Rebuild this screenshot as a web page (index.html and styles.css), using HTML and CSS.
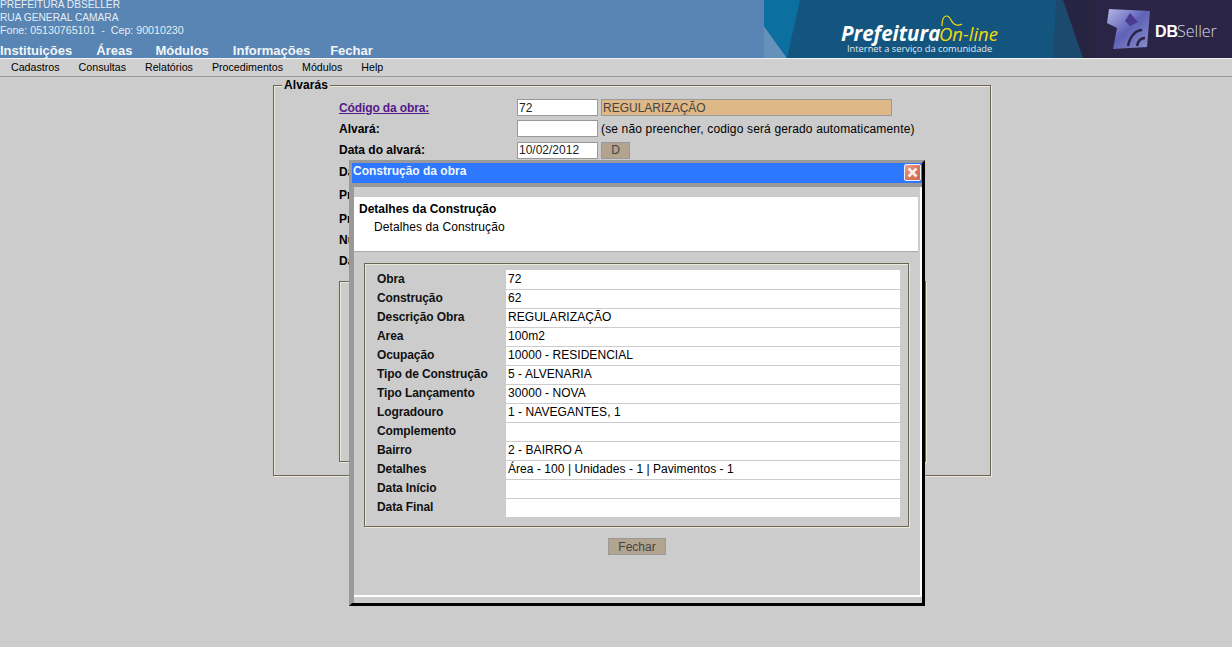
FILE: index.html
```html
<!DOCTYPE html>
<html>
<head>
	<meta charset="UTF-8">
	<title>Alvarás</title>
	<link rel="stylesheet" href="styles.css">
</head>
<body>
	<header class="topo">
		<div class="topo-esq">
			<div class="topo-info">
				PREFEITURA DBSELLER<br>
				RUA GENERAL CAMARA<br>
				<span class="fone">Fone: 05130765101 &nbsp;-&nbsp; Cep: 90010230</span>
			</div>
			<nav class="menu-topo">
				<a class="m-inst">Instituições</a>
				<a class="m-areas">Áreas</a>
				<a class="m-mod">Módulos</a>
				<a class="m-info">Informações</a>
				<a>Fechar</a>
			</nav>
		</div>
		<svg class="banner" width="468" height="58" viewBox="764 0 468 58">
			<defs>
				<linearGradient id="cubo" x1="0" y1="0" x2="1" y2="1">
					<stop offset="0" stop-color="#b4b8e6"/>
					<stop offset="0.5" stop-color="#5f62b6"/>
					<stop offset="1" stop-color="#8a90cc"/>
				</linearGradient>
			</defs>
			<rect x="764" y="0" width="468" height="58" fill="#13557f"/>
			<polygon points="764,0 764,26 787,58 764,58" fill="#6592bb"/>
			<polygon points="764,0 800,0 787,58 764,26" fill="#0b6f9f"/>
			<polygon points="1056,0 1063,0 1083,58 1053,58" fill="#1b4a6e"/>
			<polygon points="1063,0 1232,0 1232,58 1083,58" fill="#272442"/>
			<polygon points="1095,0 1232,0 1232,58 1095,58" fill="#2a2546"/>
			<text class="b-pref" x="841" y="41">Prefeitura</text>
			<text class="b-on" x="939" y="41">On-line</text>
			<path class="b-til" d="M942 26 C942 14 948 14 951 20 C954 26 959 26 962 24"/>
			<text class="b-sub" x="847" y="52">Internet a serviço da comunidade</text>
			<polygon points="1109,9 1150,11 1147,47 1113,49 1117,28 1107,23" fill="url(#cubo)"/>
			<polygon points="1125,21 1130,13 1138,22 1130,26" fill="#4a3a90"/>
			<path class="b-arco" d="M1128 46 C1130 36 1136 30 1142 30"/>
			<path class="b-arco" d="M1137 46 C1138 41 1141 38 1145 38"/>
			<text class="b-db" x="1155" y="37">DB</text>
			<text class="b-seller" x="1177" y="37">Seller</text>
		</svg>
	</header>
	<nav class="menu-sub">
		<a>Cadastros</a>
		<a>Consultas</a>
		<a>Relatórios</a>
		<a>Procedimentos</a>
		<a>Módulos</a>
		<a>Help</a>
	</nav>

	<fieldset class="alvaras">
		<legend>Alvarás</legend>
		<div class="form-obra">
			<div class="linha"><a class="rotulo link">Código da obra:</a><input class="campo" value="72"><input class="campo descr" value="REGULARIZAÇÃO"></div>
			<div class="linha"><b class="rotulo">Alvará:</b><input class="campo"><span class="nota">(se não preencher, codigo será gerado automaticamente)</span></div>
			<div class="linha h22"><b class="rotulo">Data do alvará:</b><input class="campo" value="10/02/2012"><button class="botao btn-d">D</button></div>
			<div class="linha"><b class="rotulo">Data de validade:</b></div>
			<div class="linha h26"><b class="rotulo">Processo:</b></div>
			<div class="linha"><b class="rotulo">Proprietário:</b></div>
			<div class="linha"><b class="rotulo">Número:</b></div>
			<div class="linha"><b class="rotulo">Data:</b></div>
			<div class="caixa-obs"></div>
		</div>
	</fieldset>

	<section class="janela">
		<div class="janela-titulo">
			<span>Construção da obra</span>
			<span class="fechar-x">
				<svg width="17" height="17" viewBox="0 0 17 17">
					<defs>
						<linearGradient id="xfundo" x1="0" y1="0" x2="1" y2="1">
							<stop offset="0" stop-color="#e8a58f"/>
							<stop offset="0.5" stop-color="#d9775c"/>
							<stop offset="1" stop-color="#cf6a50"/>
						</linearGradient>
					</defs>
					<rect x="0.5" y="0.5" width="16" height="16" rx="1.5" fill="url(#xfundo)" stroke="#eef3ff"/>
					<path d="M4.5 4.5 L12.5 12.5 M12.5 4.5 L4.5 12.5" stroke="#fbeee9" stroke-width="2.8"/>
				</svg>
			</span>
		</div>
		<div class="janela-corpo">
			<div class="corpo-interno">
				<div class="cabecalho">
					<b>Detalhes da Construção</b>
					<p>Detalhes da Construção</p>
				</div>
				<div class="quadro">
					<table class="dados">
						<tr><th>Obra</th><td>72</td></tr>
						<tr><th>Construção</th><td>62</td></tr>
						<tr><th>Descrição Obra</th><td>REGULARIZAÇÃO</td></tr>
						<tr><th>Area</th><td>100m2</td></tr>
						<tr><th>Ocupação</th><td>10000 - RESIDENCIAL</td></tr>
						<tr><th>Tipo de Construção</th><td>5 - ALVENARIA</td></tr>
						<tr><th>Tipo Lançamento</th><td>30000 - NOVA</td></tr>
						<tr><th>Logradouro</th><td>1 - NAVEGANTES, 1</td></tr>
						<tr><th>Complemento</th><td></td></tr>
						<tr><th>Bairro</th><td>2 - BAIRRO A</td></tr>
						<tr><th>Detalhes</th><td>Área - 100 | Unidades - 1 | Pavimentos - 1</td></tr>
						<tr><th>Data Início</th><td></td></tr>
						<tr><th>Data Final</th><td></td></tr>
					</table>
				</div>
				<div class="acoes"><button class="botao btn-fechar">Fechar</button></div>
			</div>
		</div>
	</section>
</body>
</html>
```

FILE: styles.css
```css
* {
	box-sizing: border-box;
}
body {
	margin: 0;
	background-color: #CCCCCC;
	font-family: "Liberation Sans", Arial, sans-serif;
	font-size: 12px;
	color: #000;
	overflow: hidden;
	height: 647px;
}
.topo {
	display: flex;
	justify-content: space-between;
	height: 58px;
	background-color: #5885B3;
	overflow: hidden;
}
.topo-info {
	margin-top: -2px;
	font-size: 10.2px;
	line-height: 13px;
	color: #E6EDF5;
}
.fone {
	font-size: 10.67px;
}
.menu-topo {
	display: flex;
	margin-top: 6px;
	font-size: 13px;
	font-weight: bold;
	line-height: 15px;
	color: #F2F5F9;
}
.m-inst { margin-right: 24px; }
.m-areas { margin-right: 23px; }
.m-mod { margin-right: 24px; }
.m-info { margin-right: 20px; }
.banner {
	flex: none;
	display: block;
}
.b-pref {
	font-family: "Open Sans", sans-serif;
	font-size: 20.5px;
	font-weight: 700;
	font-style: italic;
	fill: #fff;
}
.b-on {
	font-family: "Open Sans", sans-serif;
	font-size: 18.5px;
	font-weight: 400;
	font-style: italic;
	fill: #F4D90E;
}
.b-til {
	fill: none;
	stroke: #F4D90E;
	stroke-width: 1.2;
}
.b-sub {
	font-family: "Open Sans", sans-serif;
	font-size: 9.3px;
	fill: #E2EAF0;
}
.b-arco {
	fill: none;
	stroke: #2a2546;
	stroke-width: 2.5;
}
.b-db {
	font-family: "Liberation Sans", sans-serif;
	font-size: 16px;
	font-weight: bold;
	fill: #fff;
}
.b-seller {
	font-family: "Open Sans", sans-serif;
	font-size: 16px;
	font-weight: 300;
	fill: #D8D8E0;
}
.menu-sub {
	display: flex;
	gap: 19px;
	height: 19px;
	padding-left: 11px;
	background-color: #D0D0D0;
	border-top: 1px solid #F2F2F2;
	border-bottom: 1px solid #999;
	font-size: 10.67px;
	line-height: 17px;
}

/* formulario de tras */
.alvaras {
	width: 718px;
	height: 398px;
	margin: 1px 0 0 273px;
	padding: 0;
	border: 1px solid #6B6558;
	box-shadow: 1px 1px 0 #ECE9D8, inset 1px 1px 0 #ECE9D8;
	min-width: 0;
}
.alvaras legend {
	margin-left: 8px;
	padding: 0 2px;
	background-color: #CCCCCC;
	font-weight: bold;
	line-height: 14px;
	letter-spacing: 0.1px;
}
.form-obra {
	padding: 5px 0 0 65px;
}
.linha {
	display: flex;
	align-items: center;
	height: 21px;
}
.h22 { height: 22px; }
.h26 { height: 26px; }
.rotulo {
	width: 178px;
	flex: none;
	font-weight: bold;
}
.link {
	color: #551A8B;
	text-decoration: underline;
	letter-spacing: -0.12px;
}
.campo {
	width: 81px;
	height: 17px;
	margin: 0;
	padding: 0 1px;
	border: 1px solid #999;
	background-color: #fff;
	font: 12px "Liberation Sans", Arial, sans-serif;
	color: #222;
}
.descr {
	width: 291px;
	margin-left: 3px;
	background-color: #DEB887;
	color: #444;
}
.nota {
	margin-left: 3px;
	letter-spacing: 0.15px;
}
.botao {
	padding: 0;
	border: 1px solid #999;
	background-color: #B3A48F;
	font: 12px "Liberation Sans", Arial, sans-serif;
	color: #444;
}
.btn-d {
	width: 29px;
	height: 17px;
	margin-left: 3px;
}
.caixa-obs {
	width: 587px;
	height: 181px;
	margin-top: 10px;
	border: 1px solid #6B6558;
	box-shadow: 1px 1px 0 #ECE9D8, inset 1px 1px 0 #ECE9D8;
}

/* janela de detalhes */
.janela {
	position: absolute;
	left: 349px;
	top: 160px;
	width: 576px;
	height: 446px;
	border-style: solid;
	border-width: 3px;
	border-color: #999 #000 #000 #999;
	background-color: #CCCCCC;
	display: flex;
	flex-direction: column;
}
.janela-titulo {
	display: flex;
	justify-content: space-between;
	align-items: flex-start;
	flex: none;
	height: 20px;
	padding: 0 1px;
	background-color: #2E77FF;
	color: #F2F6FF;
	font-weight: bold;
	line-height: 16px;
}
.fechar-x {
	display: block;
	margin-top: 1px;
	height: 17px;
}
.fechar-x svg {
	display: block;
}
.janela-corpo {
	flex: 1;
	border-style: solid;
	border-width: 4px 0 0 2px;
	border-color: #999;
}
.corpo-interno {
	height: 410px;
	padding-top: 10px;
	border-right: 2px solid #fff;
	border-bottom: 2px solid #fff;
}
.cabecalho {
	height: 55px;
	margin-right: 2px;
	padding: 5px 5px 0;
	background-color: #fff;
	border-bottom: 1px solid #aaa;
	line-height: 14px;
}
.cabecalho p {
	margin: 4px 0 0 15px;
	letter-spacing: 0.09px;
}
.quadro {
	width: 545px;
	height: 264px;
	margin: 11px 0 0 10px;
	padding: 6px 0 0 9px;
	border: 1px solid #6B6558;
	box-shadow: 1px 1px 0 #ECE9D8, inset 1px 1px 0 #ECE9D8;
}
.dados {
	border-collapse: collapse;
	width: 526px;
	table-layout: fixed;
}
.dados th {
	width: 132px;
	padding: 0 0 1px 3px;
	text-align: left;
	font-weight: bold;
	color: #111;
	letter-spacing: -0.1px;
}
.dados td {
	height: 19px;
	padding: 0 2px 1px;
	background-color: #fff;
	border-bottom: 1px solid #CCCCCC;
	letter-spacing: 0.05px;
}
.acoes {
	display: flex;
	justify-content: center;
	margin-top: 11px;
}
.btn-fechar {
	width: 58px;
	height: 17px;
}
```
